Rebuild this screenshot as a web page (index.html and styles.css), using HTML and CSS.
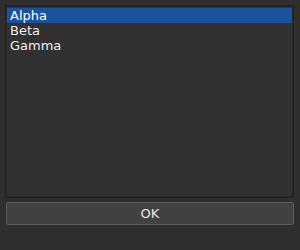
FILE: index.html
```html
<!doctype html>
<html lang="en">
<head>
  <meta charset="UTF-8">
  <title>Pick one</title>
  <link rel="stylesheet" href="styles.css">
</head>
<body>
  <form class="dialog">
    <ul class="list">
      <li class="selected">Alpha</li>
      <li>Beta</li>
      <li>Gamma</li>
    </ul>
    <button type="button" class="ok">OK</button>
  </form>
</body>
</html>
```
FILE: styles.css
```css
html, body { margin: 0; padding: 0; height: 100%; }
body { background: #2e2e2e; color: #eeeeee; font-family: "DejaVu Sans", sans-serif; font-size: 13px; }

.dialog { display: flex; flex-direction: column; height: 100%; box-sizing: border-box; padding: 5px 6px 25px 5px; gap: 4px; }

.list { flex: 1; margin: 0; padding: 2px 1px 1px 1px; list-style: none; background: #313131; border: 1px solid #202020; box-shadow: inset 0 0 0 1px #282828; }
.list li { height: 15px; line-height: 15px; padding: 0 3px; }
.list li.selected { background: #1b52a0; color: #ffffff; }

.ok { height: 23px; margin-left: 1px; background: #414141; color: #e8e8e8; border: 1px solid #5c5c5c; border-radius: 2px; font-family: inherit; font-size: 13px; padding: 0; }
```
